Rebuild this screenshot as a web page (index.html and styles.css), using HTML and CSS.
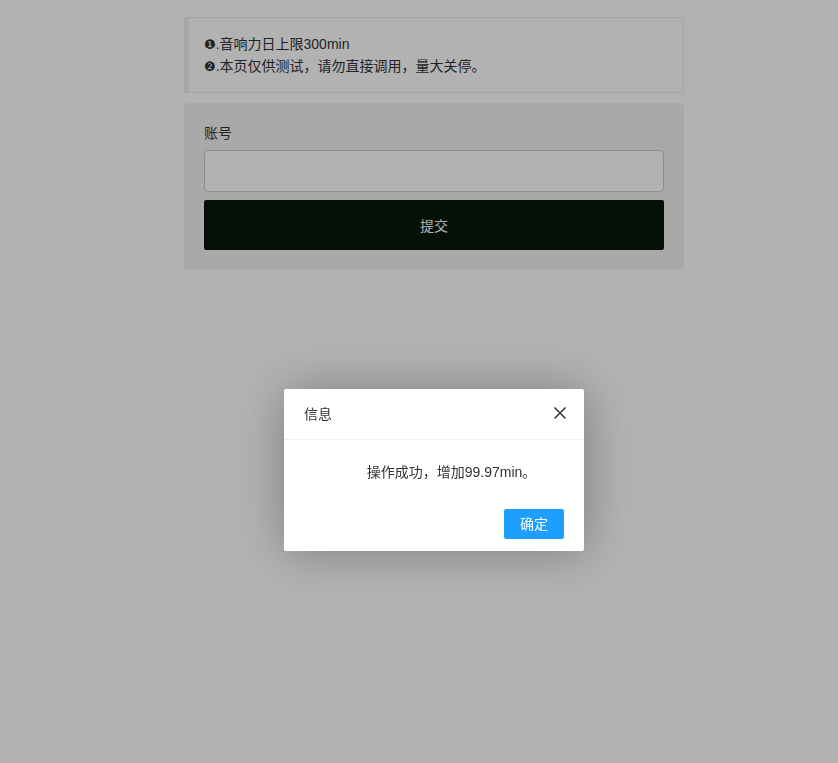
FILE: index.html
```html
<!DOCTYPE html>
<html lang="zh-CN">
<head>
<meta charset="utf-8">
<title>提交</title>
<link rel="stylesheet" href="styles.css">
</head>
<body>
<div class="page">
  <div class="quote">
    <div class="line"><span class="num">❶</span>.音响力日上限300min</div>
    <div class="line"><span class="num">❷</span>.本页仅供测试，请勿直接调用，量大关停。</div>
  </div>
  <form class="card">
    <label class="label">账号</label>
    <input class="input" type="text">
    <button class="submit" type="button">提交</button>
  </form>
</div>
<div class="shade"></div>
<div class="layer-wrap">
  <div class="layer">
    <div class="layer-title">信息
      <span class="close"><svg width="12" height="12" viewBox="0 0 12 12"><path d="M0.5 0.5L11.5 11.5M11.5 0.5L0.5 11.5" stroke="#333" stroke-width="1.5" fill="none"/></svg></span>
    </div>
    <div class="layer-content">操作成功，增加99.97min。</div>
    <div class="layer-btns"><a class="btn">确定</a></div>
  </div>
</div>
</body>
</html>
```
FILE: styles.css
```css
* { box-sizing: border-box; }
html, body { margin: 0; padding: 0; background: #fff; }
body {
  font-family: "Liberation Sans", "Noto Sans CJK SC", sans-serif;
  font-size: 14px;
  color: #333;
  height: 763px;
  overflow: hidden;
  padding-left: 30px;
}
.page {
  width: 500px;
  margin: 17px auto 0;
}
.quote {
  border: 1px solid #eee;
  border-left-width: 5px;
  padding: 15px;
  margin-bottom: 10px;
}
.line { height: 22px; line-height: 22px; overflow: hidden; }
.num { font-family: "DejaVu Sans", sans-serif; font-size: 13px; line-height: 1; }
.card {
  display: flex;
  flex-direction: column;
  background: #f2f2f2;
  border-radius: 4px;
  padding: 20px;
  margin: 0;
}
.label { line-height: 20px; height: 20px; margin-bottom: 7px; color: #333; }
.input {
  height: 42px;
  border: 1px solid #ccc;
  border-radius: 4px;
  background: #fff;
  margin: 0 0 8px;
}
.submit {
  height: 50px;
  border: 0;
  border-radius: 2px;
  background: #091709;
  color: #fff;
  font-family: inherit;
  font-size: 14px;
}
.shade {
  position: fixed;
  inset: 0;
  background: rgba(0,0,0,.3);
}
.layer-wrap {
  position: fixed;
  inset: 0;
  display: flex;
  justify-content: center;
  align-items: flex-start;
  padding: 389px 0 0 30px;
}
.layer {
  width: 300px;
  background: #fff;
  border-radius: 2px;
  box-shadow: 1px 1px 50px rgba(0,0,0,.3);
}
.layer-title {
  position: relative;
  height: 51px;
  line-height: 50px;
  padding: 0 81px 0 20px;
  border-bottom: 1px solid #f0f0f0;
  color: #333;
  font-size: 14px;
}
.close {
  position: absolute;
  right: 18px;
  top: 18px;
  width: 12px;
  height: 12px;
  display: block;
}
.close svg { display: block; }
.layer-content {
  padding: 20px 20px 20px 55px;
  line-height: 24px;
  text-align: center;
  color: #333;
}
.layer-btns {
  text-align: right;
  padding: 0 15px 12px;
}
.btn {
  display: inline-block;
  height: 30px;
  line-height: 28px;
  margin: 5px 5px 0;
  padding: 0 15px;
  border: 1px solid #1e9fff;
  background: #1e9fff;
  border-radius: 2px;
  color: #fff;
  font-size: 14px;
  vertical-align: top;
}
```
